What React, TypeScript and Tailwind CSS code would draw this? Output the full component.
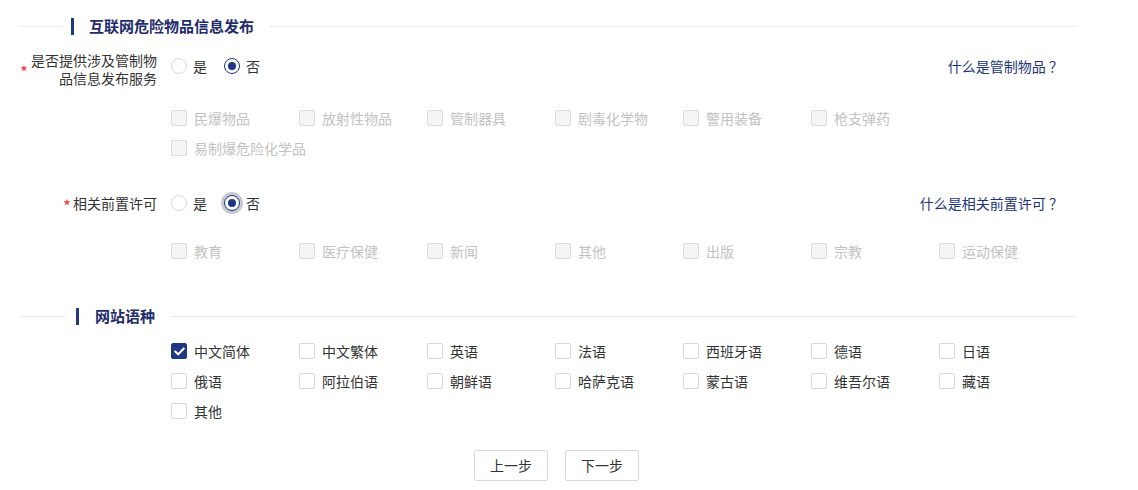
import React from "react";

function Radio({ checked, focus, label }: { checked?: boolean; focus?: boolean; label: string }) {
  return (
    <div className="flex items-center">
      <span
        className={
          "box-border flex h-[16px] w-[16px] items-center justify-center rounded-full border bg-white " +
          (checked ? "border-[#1f3785] " : "border-[#d9d9d9] ") +
          (focus ? "shadow-[0_0_0_3px_#c6c9d2]" : "")
        }
      >
        {checked && <span className="h-[8px] w-[8px] rounded-full bg-[#1f3785]" />}
      </span>
      <span className="ml-[6px] text-[14px] leading-[20px] text-[#333]">{label}</span>
    </div>
  );
}

function Check({ label, checked, disabled }: { label: string; checked?: boolean; disabled?: boolean }) {
  return (
    <div className="flex h-[30px] items-center whitespace-nowrap">
      <span
        className={
          "box-border flex h-[16px] w-[16px] shrink-0 items-center justify-center rounded-[2px] border " +
          (checked
            ? "border-[#1f3785] bg-[#1f3785]"
            : disabled
            ? "border-[#dcdcdc] bg-[#f5f5f5]"
            : "border-[#d9d9d9] bg-white")
        }
      >
        {checked && (
          <svg width="11" height="9" viewBox="0 0 11 9" fill="none">
            <path d="M1.3 4.6 L4.2 7.3 L9.7 1.6" stroke="white" strokeWidth="2" strokeLinecap="square" />
          </svg>
        )}
      </span>
      <span className={"ml-[7px] text-[14px] leading-[20px] " + (disabled ? "text-[#c2c2c2]" : "text-[#333]")}>
        {label}
      </span>
    </div>
  );
}

function SectionHeader({ title, leftW, titleMl }: { title: string; leftW: string; titleMl: string }) {
  return (
    <div className="flex h-[20px] items-center pl-[20px] pr-[62px]">
      <div className={"h-px bg-[#ececec] " + leftW} />
      <div className="ml-[9px] h-[17px] w-[3px] bg-[#1f3785]" />
      <div className={"whitespace-nowrap text-[15px] font-bold leading-[20px] text-[#1e2c6b] " + titleMl}>{title}</div>
      <div className="ml-[15px] h-px flex-1 bg-[#ececec]" />
    </div>
  );
}

function CheckGrid({
  items,
  disabled,
  checkedIdx,
  cols,
}: {
  items: string[];
  disabled?: boolean;
  checkedIdx?: number;
  cols: string;
}) {
  return (
    <div className={"grid pl-[171px] " + cols}>
      {items.map((it, i) => (
        <Check key={it} label={it} disabled={disabled} checked={checkedIdx === i} />
      ))}
    </div>
  );
}

export default function App() {
  return (
    <div
      className="h-[490px] w-[1138px] overflow-hidden bg-white pt-[16px]"
      style={{ fontFamily: '"Noto Sans CJK SC", "Noto Sans", sans-serif' }}
    >
      <SectionHeader title="互联网危险物品信息发布" leftW="w-[42px]" titleMl="ml-[15px]" />

      {/* Row 1 */}
      <div className="mt-[15px] flex items-start pr-[75px]">
        <div className="flex w-[157px] items-center justify-end pl-[18px]">
          <span className="mr-[3px] translate-y-[3px] text-[17px] leading-[18px] text-[#e83c3c]">*</span>
          <span className="w-[126px] text-right text-[14px] leading-[18px] text-[#333]">
            是否提供涉及管制物品信息发布服务
          </span>
        </div>
        <div className="ml-[14px] mt-[5px] flex items-center gap-[17px]">
          <Radio label="是" />
          <Radio label="否" checked />
        </div>
        <div className="ml-auto mt-[5px] text-[14px] leading-[20px] text-[#22347a]">什么是管制物品 ？</div>
      </div>

      <div className="mt-[16px]">
        <CheckGrid
          disabled
          cols="grid-cols-[repeat(6,128px)]"
          items={["民爆物品", "放射性物品", "管制器具", "剧毒化学物", "警用装备", "枪支弹药", "易制爆危险化学品"]}
        />
      </div>

      {/* Row 2 */}
      <div className="mt-[30px] flex h-[20px] items-center pr-[75px]">
        <div className="flex w-[157px] items-center justify-end">
          <span className="mr-[2px] translate-y-[3px] text-[17px] leading-[20px] text-[#e83c3c]">*</span>
          <span className="text-[14px] leading-[20px] text-[#333]">相关前置许可</span>
        </div>
        <div className="ml-[14px] flex items-center gap-[17px]">
          <Radio label="是" />
          <Radio label="否" checked focus />
        </div>
        <div className="ml-auto text-[14px] leading-[20px] text-[#22347a]">什么是相关前置许可 ？</div>
      </div>

      <div className="mt-[23px]">
        <CheckGrid
          disabled
          cols="grid-cols-[repeat(7,128px)]"
          items={["教育", "医疗保健", "新闻", "其他", "出版", "宗教", "运动保健"]}
        />
      </div>

      <div className="mt-[40px]">
        <SectionHeader title="网站语种" leftW="w-[47px]" titleMl="ml-[16px]" />
      </div>

      <div className="mt-[10px]">
        <CheckGrid
          checkedIdx={0}
          cols="grid-cols-[repeat(7,128px)]"
          items={[
            "中文简体",
            "中文繁体",
            "英语",
            "法语",
            "西班牙语",
            "德语",
            "日语",
            "俄语",
            "阿拉伯语",
            "朝鲜语",
            "哈萨克语",
            "蒙古语",
            "维吾尔语",
            "藏语",
            "其他",
          ]}
        />
      </div>

      <div className="mt-[24px] flex gap-[17px] pl-[474px]">
        <button className="box-border h-[31px] w-[74px] rounded-[2px] border border-[#d9d9d9] bg-white text-[14px] text-[#333]">
          上一步
        </button>
        <button className="box-border h-[31px] w-[74px] rounded-[2px] border border-[#d9d9d9] bg-white text-[14px] text-[#333]">
          下一步
        </button>
      </div>
    </div>
  );
}
